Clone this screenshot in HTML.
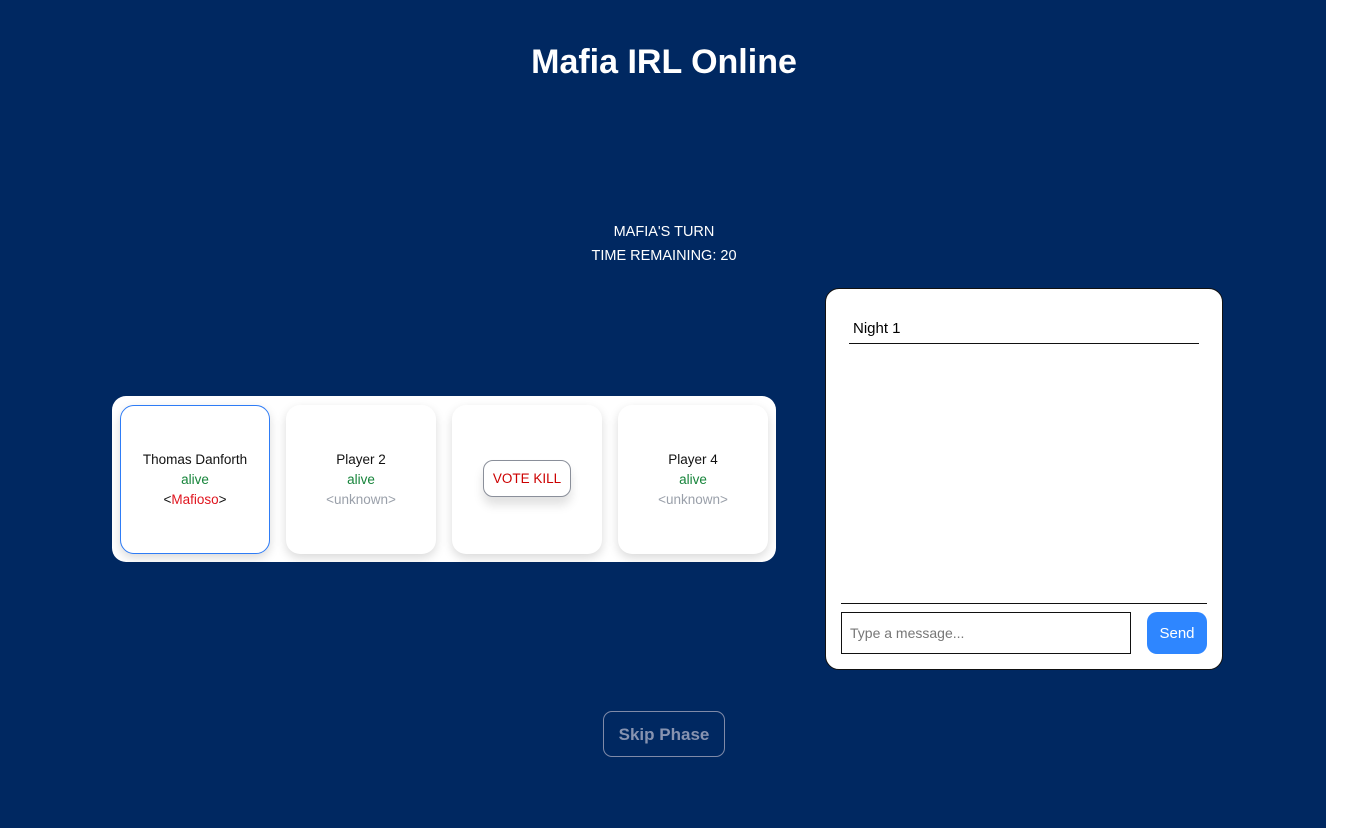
<!DOCTYPE html>
<html><head><style>
body{margin:0;width:1370px;height:828px;background:#fff;font-family:"Liberation Sans",sans-serif;position:relative;overflow:hidden}
.bg{position:absolute;left:0;top:0;width:1326px;height:828px;background:#002861}
h1{position:absolute;top:43px;left:0;width:1328px;text-align:center;margin:0;color:#fff;font-size:34px;font-weight:bold}
.turn{position:absolute;top:220px;left:0;width:1328px;text-align:center;color:#fff;font-size:14.5px;line-height:24px}
.board{position:absolute;left:112px;top:396px;width:664px;height:166px;background:#fff;border-radius:14px}
.card{position:absolute;top:9px;width:150px;height:149px;background:#fff;border-radius:14px;box-shadow:0 4px 10px rgba(0,0,0,.15);text-align:center;font-size:13.5px;line-height:20px;box-sizing:border-box;padding-top:45px;color:#111}
.g{color:#16843a}.u{color:#9aa0aa}.r{color:#e0141e}
.vote{position:absolute;left:31px;top:55px;width:88px;height:37px;border:1px solid #8a8f9a;border-radius:10px;box-sizing:border-box;color:#c00;line-height:36px;background:#fff;box-shadow:0 8px 10px rgba(0,0,0,.12)}
.chat{position:absolute;left:825px;top:288px;width:398px;height:382px;background:#fff;border:1px solid #111;border-radius:14px;box-sizing:border-box}
.night{position:absolute;left:23px;top:31px;width:350px;border-bottom:1px solid #111;padding:0 0 6px 4px;font-size:15px;box-sizing:border-box}
.line{position:absolute;left:15px;top:314px;width:366px;border-top:1px solid #111}
.inp{position:absolute;left:15px;top:323px;width:290px;height:42px;border:1px solid #111;box-sizing:border-box;font-size:14px;color:#777;padding:12px 8px}
.send{position:absolute;left:321px;top:323px;width:60px;height:42px;background:#2e86ff;border-radius:10px;color:#fff;font-size:15px;text-align:center;line-height:44px}
.skip{position:absolute;left:603px;top:711px;width:122px;height:46px;border:1px solid #7f8aa8;border-radius:9px;box-sizing:border-box;color:#8793b0;font-weight:bold;font-size:17px;text-align:center;line-height:46px}
</style></head><body>
<div class="bg"></div>
<h1>Mafia IRL Online</h1>
<div class="turn">MAFIA'S TURN<br>TIME REMAINING: 20</div>
<div class="board">
<div class="card" style="left:8px;border:1px solid #2e7cf6;padding-top:44px">Thomas Danforth<br><span class="g">alive</span><br>&lt;<span class="r">Mafioso</span>&gt;</div>
<div class="card" style="left:174px">Player 2<br><span class="g">alive</span><br><span class="u">&lt;unknown&gt;</span></div>
<div class="card" style="left:340px"><div class="vote">VOTE KILL</div></div>
<div class="card" style="left:506px">Player 4<br><span class="g">alive</span><br><span class="u">&lt;unknown&gt;</span></div>
</div>
<div class="chat"><div class="night">Night 1</div><div class="line"></div><div class="inp">Type a message...</div><div class="send">Send</div></div>
<div class="skip">Skip Phase</div>
</body></html>
